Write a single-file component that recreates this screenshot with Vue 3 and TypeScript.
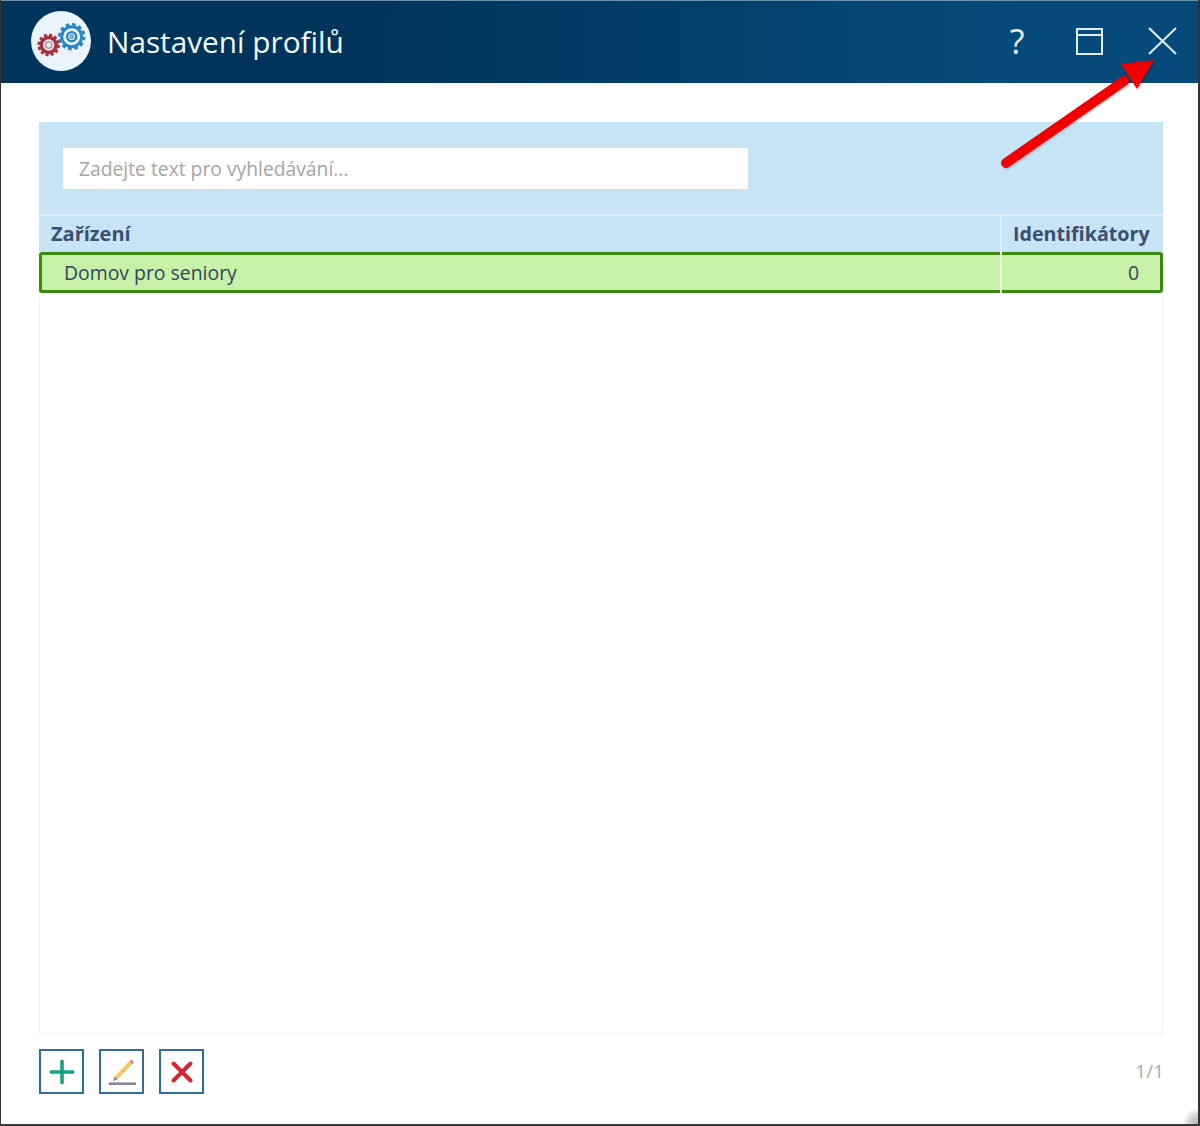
<script setup lang="ts">
const columns: string[] = ['Zařízení', 'Identifikátory']
const rowName = 'Domov pro seniory'
const rowCount = 0
</script>

<template>
  <div class="window">
    <header class="titlebar">
      <div class="logo">
        <svg width="60" height="60" viewBox="0 0 60 60">
          <circle cx="30" cy="30" r="30" fill="#e9f4fc" />
          <g fill="none" stroke="#a92f3c">
            <circle cx="17.700" cy="34" r="10" stroke-width="2.600" stroke-dasharray="3.1 2.14" />
            <circle cx="17.700" cy="34" r="7.500" stroke-width="3.600" />
            <circle cx="17.700" cy="34" r="3.200" stroke-width="1.600" stroke="#c98f95" />
          </g>
          <g fill="none" stroke="#2a85c6">
            <circle cx="40.700" cy="25.700" r="12.400" stroke-width="2.600" stroke-dasharray="3.6 2.89" />
            <circle cx="40.700" cy="25.700" r="10" stroke-width="3" />
            <circle cx="40.700" cy="25.700" r="4.600" stroke-width="2.400" />
            <circle cx="40.700" cy="25.700" r="2.600" fill="#7fa9c6" stroke="none" />
          </g>
        </svg>
      </div>
      <h1 class="title">Nastavení profilů</h1>
      <div class="controls">
        <span class="help">?</span>
        <svg class="ctl max" width="27" height="27" viewBox="0 0 27 27" fill="none" stroke="#e4edf3" stroke-width="2">
          <rect x="1" y="1" width="25" height="25" />
          <path d="M1 7H26" />
        </svg>
        <svg class="ctl close" width="29" height="28" viewBox="0 0 29 28" fill="none" stroke="#e4edf3" stroke-width="2">
          <path d="M1 1L28 27M28 1L1 27" />
        </svg>
      </div>
    </header>

    <main class="body">
      <section class="panel">
        <div class="search-band">
          <div class="search">Zadejte text pro vyhledávání...</div>
        </div>
        <div class="grid-head">
          <div class="cell-main head head-main">{{ columns[0] }}</div>
          <div class="cell-side head">{{ columns[1] }}</div>
        </div>
        <div class="row">
          <div class="cell-main row-name">{{ rowName }}</div>
          <div class="cell-side row-count">{{ rowCount }}</div>
        </div>
      </section>

      <footer class="footer">
        <div class="buttons">
          <button class="btn" type="button" aria-label="Přidat">
            <svg width="28" height="28" viewBox="0 0 28 28" fill="none" stroke="#14a386" stroke-width="3.600" stroke-linecap="round">
              <path d="M14 3.300V24.700M3.300 14H24.700" />
            </svg>
          </button>
          <button class="btn" type="button" aria-label="Upravit">
            <svg width="30" height="30" viewBox="0 0 30 30" fill="none">
              <path d="M24.500 5L8.500 21.500" stroke="#f6c95f" stroke-width="4" />
              <path d="M23.500 3.500L26 6" stroke="#e5767c" stroke-width="2.500" />
              <path d="M8 20L10 22L6.500 23.500Z" fill="#8d8d92" stroke="#8d8d92" />
              <path d="M1.700 26.700H29" stroke="#8f8496" stroke-width="2.600" />
            </svg>
          </button>
          <button class="btn" type="button" aria-label="Smazat">
            <svg width="24" height="24" viewBox="0 0 24 24" fill="none" stroke="#d8252f" stroke-width="4" stroke-linecap="round">
              <path d="M3.500 3.500L20.500 20.500M20.500 3.500L3.500 20.500" />
            </svg>
          </button>
        </div>
        <span class="pager">1/1</span>
      </footer>
    </main>

    <svg class="arrow" width="170" height="116" viewBox="0 0 170 116">
      <path d="M7 104L125 22" stroke="#f00000" stroke-width="10" stroke-linecap="round" fill="none" />
      <path d="M155 1L122 5L138 30Z" fill="#f00000" />
    </svg>
    <div class="grip"></div>
  </div>
</template>

<style scoped>
.window {
  position: relative;
  box-sizing: border-box;
  width: 1200px;
  height: 1126px;
  display: flex;
  flex-direction: column;
  background: #fff;
  border-left: 1px solid #333;
  border-right: 2px solid #333;
  border-bottom: 2px solid #3a3a3a;
  font-family: "Open Sans", "Noto Sans", sans-serif;
  overflow: hidden;
}
.titlebar {
  box-sizing: border-box;
  height: 83px;
  margin: 0 -2px 0 -1px;
  flex: none;
  display: flex;
  align-items: center;
  padding: 0 23px 0 31px;
  border-top: 1px solid #6f96b0;
  background: linear-gradient(90deg, #00345a 0%, #00345a 30%, #054a7b 85%, #054a7b 100%);
}
.logo {
  width: 60px;
  height: 60px;
  flex: none;
  margin-bottom: 2px;
}
.logo svg { display: block; }
.title {
  margin: 0 0 0 16px;
  font-size: 29.750px;
  font-weight: 400;
  line-height: 40px;
  color: #f2f7fa;
  white-space: nowrap;
}
.controls {
  margin-left: auto;
  margin-bottom: 2px;
  display: flex;
  align-items: center;
}
.help {
  font-size: 34px;
  line-height: 40px;
  color: #e4edf3;
  width: 20px;
  text-align: center;
  margin-right: 49px;
}
.ctl { display: block; flex: none; }
.close { margin-left: 45px; }
.body {
  flex: 1;
  min-height: 0;
  display: flex;
  flex-direction: column;
  padding: 39px 35px 30px 38px;
}
.panel {
  flex: 1;
  min-height: 0;
  box-sizing: border-box;
  border: 1px solid #edf1fa;
  border-top: 0;
  display: flex;
  flex-direction: column;
}
.search-band {
  box-sizing: border-box;
  height: 94px;
  padding: 26px 0 0 24px;
  background: #c7e4f5;
  border-bottom: 2px solid #dcedf8;
  margin: 0 -1px;
}
.search {
  box-sizing: border-box;
  width: 685px;
  height: 41px;
  padding-left: 16px;
  background: #fff;
  color: #a5a5a5;
  font-size: 19.300px;
  line-height: 42px;
  white-space: nowrap;
}
.grid-head {
  display: flex;
  height: 36px;
  margin: 0 -1px;
  background: #c7e4f5;
}
.cell-main {
  flex: 1;
  min-width: 0;
  box-sizing: border-box;
}
.cell-side {
  width: 163px;
  flex: none;
  box-sizing: border-box;
  border-left: 2px solid #dcedf8;
}
.head {
  font-size: 19.700px;
  font-weight: 700;
  line-height: 36px;
  color: #3a4f70;
  padding-left: 11px;
  white-space: nowrap;
}
.head-main {
  padding-left: 12px;
  font-size: 20px;
}
.row {
  display: flex;
  box-sizing: border-box;
  height: 41px;
  margin: 0 -1px;
  background: #c6f1a6;
  border: 3px solid #3a8a10;
  border-radius: 3px;
}
.row-name {
  padding-left: 22px;
  font-size: 19.400px;
  line-height: 35px;
  color: #34445e;
}
.row-count {
  width: 160px;
  margin-top: -3px;
  margin-bottom: -3px;
  padding-right: 21px;
  text-align: right;
  font-size: 19.400px;
  line-height: 41px;
  color: #34445e;
  border-left-color: #e9f4e2;
}
.footer {
  flex: none;
  display: flex;
  justify-content: space-between;
  align-items: flex-end;
  height: 60px;
}
.buttons {
  display: flex;
  gap: 15px;
}
.btn {
  box-sizing: border-box;
  width: 45px;
  height: 45px;
  padding: 0;
  display: flex;
  align-items: center;
  justify-content: center;
  background: #fff;
  border: 2px solid #2f6e9b;
  border-radius: 0;
}
.btn svg { display: block; }
.pager {
  font-size: 19px;
  line-height: 45px;
  color: #a9a9a9;
  margin-right: -1px;
}
.arrow {
  position: absolute;
  left: 998px;
  top: 59px;
  filter: drop-shadow(1px 1px 1px rgba(0, 0, 0, 0.25));
}
.grip {
  position: absolute;
  right: 0;
  bottom: 0;
  width: 16px;
  height: 16px;
  background: radial-gradient(circle 16px at 100% 100%, #b5b5b5 0%, #d8d8d8 60%, rgba(255, 255, 255, 0) 100%);
}
</style>
